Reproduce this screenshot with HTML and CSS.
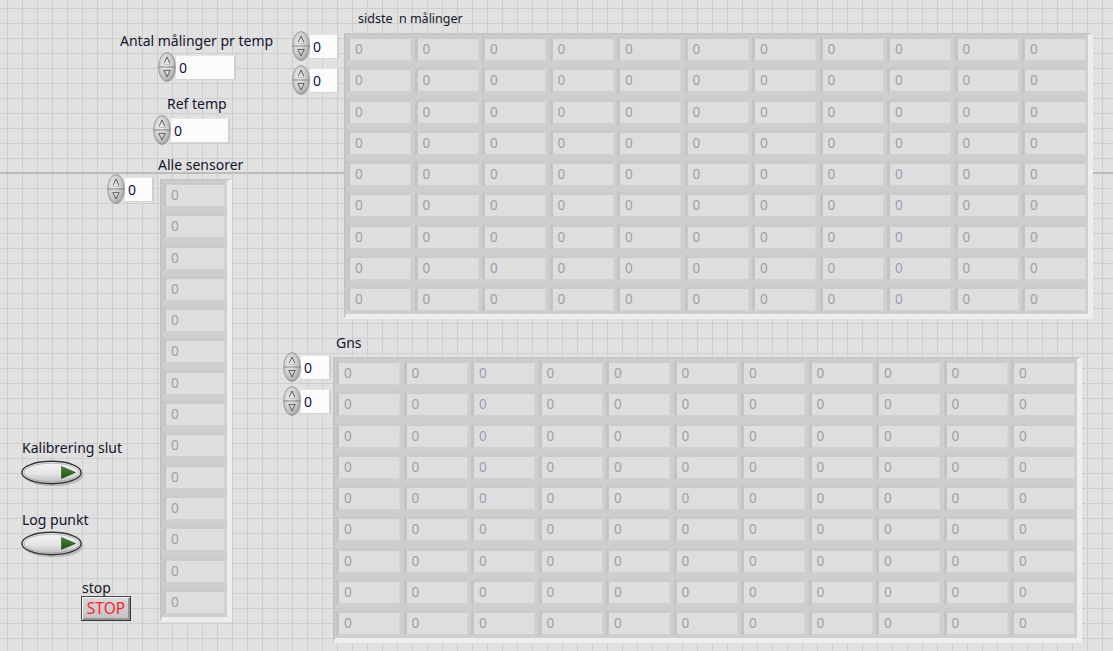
FILE: index.html
```html
<!DOCTYPE html>
<html lang="da">
<head>
<meta charset="utf-8">
<title>Kalibrering</title>
<link rel="stylesheet" href="styles.css">
</head>
<body>
<div class="panel">

  <!-- Antal målinger pr temp -->
  <div class="obj obj-antal">
    <div class="label">Antal målinger pr temp</div>
    <div class="numeric ind-antal">
      <svg class="spin" width="18" height="30" viewBox="0 0 18 30"><defs><radialGradient id="sg" cx="0.4" cy="0.4" r="0.75"><stop offset="0" stop-color="#f2f2f2"/><stop offset="0.55" stop-color="#c9c9c9"/><stop offset="1" stop-color="#8e8e8e"/></radialGradient></defs><ellipse cx="9" cy="15" rx="8.4" ry="14.4" fill="url(#sg)" stroke="#8e8e8e" stroke-width="0.8"/><line x1="1" y1="15" x2="17" y2="15" stroke="#7c7c7c" stroke-width="0.9"/><path d="M6.2 11.2 L9 5 L11.8 11.2" fill="none" stroke="#5e5e5e" stroke-width="1"/><line x1="5.8" y1="12.4" x2="12.2" y2="12.4" stroke="#b0b0b0" stroke-width="0.8"/><path d="M5.8 18.4 L12.2 18.4 L9 25 Z" fill="none" stroke="#5e5e5e" stroke-width="1"/></svg>
      <div class="field w60">0</div>
    </div>
  </div>

  <!-- Ref temp -->
  <div class="obj obj-ref">
    <div class="label">Ref temp</div>
    <div class="numeric ind-ref">
      <svg class="spin" width="18" height="30" viewBox="0 0 18 30"><ellipse cx="9" cy="15" rx="8.4" ry="14.4" fill="url(#sg)" stroke="#8e8e8e" stroke-width="0.8"/><line x1="1" y1="15" x2="17" y2="15" stroke="#7c7c7c" stroke-width="0.9"/><path d="M6.2 11.2 L9 5 L11.8 11.2" fill="none" stroke="#5e5e5e" stroke-width="1"/><line x1="5.8" y1="12.4" x2="12.2" y2="12.4" stroke="#b0b0b0" stroke-width="0.8"/><path d="M5.8 18.4 L12.2 18.4 L9 25 Z" fill="none" stroke="#5e5e5e" stroke-width="1"/></svg>
      <div class="field w59">0</div>
    </div>
  </div>

  <!-- Alle sensorer -->
  <div class="obj obj-alle">
    <div class="label">Alle sensorer</div>
    <div class="array-row">
      <div class="index-col">
        <div class="numeric">
          <svg class="spin" width="18" height="30" viewBox="0 0 18 30"><ellipse cx="9" cy="15" rx="8.4" ry="14.4" fill="url(#sg)" stroke="#8e8e8e" stroke-width="0.8"/><line x1="1" y1="15" x2="17" y2="15" stroke="#7c7c7c" stroke-width="0.9"/><path d="M6.2 11.2 L9 5 L11.8 11.2" fill="none" stroke="#5e5e5e" stroke-width="1"/><line x1="5.8" y1="12.4" x2="12.2" y2="12.4" stroke="#b0b0b0" stroke-width="0.8"/><path d="M5.8 18.4 L12.2 18.4 L9 25 Z" fill="none" stroke="#5e5e5e" stroke-width="1"/></svg>
          <div class="field w29">0</div>
        </div>
      </div>
      <div class="frame frame-alle" id="alle"></div>
    </div>
  </div>

  <!-- sidste n målinger -->
  <div class="obj obj-sidste">
    <div class="label label-small">sidste&nbsp; n målinger</div>
    <div class="array-row">
      <div class="index-col">
        <div class="numeric">
          <svg class="spin" width="18" height="30" viewBox="0 0 18 30"><ellipse cx="9" cy="15" rx="8.4" ry="14.4" fill="url(#sg)" stroke="#8e8e8e" stroke-width="0.8"/><line x1="1" y1="15" x2="17" y2="15" stroke="#7c7c7c" stroke-width="0.9"/><path d="M6.2 11.2 L9 5 L11.8 11.2" fill="none" stroke="#5e5e5e" stroke-width="1"/><line x1="5.8" y1="12.4" x2="12.2" y2="12.4" stroke="#b0b0b0" stroke-width="0.8"/><path d="M5.8 18.4 L12.2 18.4 L9 25 Z" fill="none" stroke="#5e5e5e" stroke-width="1"/></svg>
          <div class="field w29">0</div>
        </div>
        <div class="numeric">
          <svg class="spin" width="18" height="30" viewBox="0 0 18 30"><ellipse cx="9" cy="15" rx="8.4" ry="14.4" fill="url(#sg)" stroke="#8e8e8e" stroke-width="0.8"/><line x1="1" y1="15" x2="17" y2="15" stroke="#7c7c7c" stroke-width="0.9"/><path d="M6.2 11.2 L9 5 L11.8 11.2" fill="none" stroke="#5e5e5e" stroke-width="1"/><line x1="5.8" y1="12.4" x2="12.2" y2="12.4" stroke="#b0b0b0" stroke-width="0.8"/><path d="M5.8 18.4 L12.2 18.4 L9 25 Z" fill="none" stroke="#5e5e5e" stroke-width="1"/></svg>
          <div class="field w29">0</div>
        </div>
      </div>
      <div class="frame frame-2d frame-sidste" id="sidste"></div>
    </div>
  </div>

  <!-- Gns -->
  <div class="obj obj-gns">
    <div class="label">Gns</div>
    <div class="array-row">
      <div class="index-col">
        <div class="numeric">
          <svg class="spin" width="18" height="30" viewBox="0 0 18 30"><ellipse cx="9" cy="15" rx="8.4" ry="14.4" fill="url(#sg)" stroke="#8e8e8e" stroke-width="0.8"/><line x1="1" y1="15" x2="17" y2="15" stroke="#7c7c7c" stroke-width="0.9"/><path d="M6.2 11.2 L9 5 L11.8 11.2" fill="none" stroke="#5e5e5e" stroke-width="1"/><line x1="5.8" y1="12.4" x2="12.2" y2="12.4" stroke="#b0b0b0" stroke-width="0.8"/><path d="M5.8 18.4 L12.2 18.4 L9 25 Z" fill="none" stroke="#5e5e5e" stroke-width="1"/></svg>
          <div class="field w30">0</div>
        </div>
        <div class="numeric">
          <svg class="spin" width="18" height="30" viewBox="0 0 18 30"><ellipse cx="9" cy="15" rx="8.4" ry="14.4" fill="url(#sg)" stroke="#8e8e8e" stroke-width="0.8"/><line x1="1" y1="15" x2="17" y2="15" stroke="#7c7c7c" stroke-width="0.9"/><path d="M6.2 11.2 L9 5 L11.8 11.2" fill="none" stroke="#5e5e5e" stroke-width="1"/><line x1="5.8" y1="12.4" x2="12.2" y2="12.4" stroke="#b0b0b0" stroke-width="0.8"/><path d="M5.8 18.4 L12.2 18.4 L9 25 Z" fill="none" stroke="#5e5e5e" stroke-width="1"/></svg>
          <div class="field w30">0</div>
        </div>
      </div>
      <div class="frame frame-2d frame-gns" id="gns"></div>
    </div>
  </div>

  <!-- Kalibrering slut -->
  <div class="obj obj-kal">
    <div class="label">Kalibrering slut</div>
    <svg class="bool" width="66" height="28" viewBox="0 0 66 28"><defs><linearGradient id="bgrad" x1="0" y1="0" x2="0" y2="1"><stop offset="0" stop-color="#f7f7f7"/><stop offset="0.55" stop-color="#e4e4e4"/><stop offset="1" stop-color="#b8b8b8"/></linearGradient><linearGradient id="tgrad" x1="0" y1="0" x2="0" y2="1"><stop offset="0" stop-color="#3f8a2c"/><stop offset="1" stop-color="#1f4f16"/></linearGradient></defs><ellipse cx="32.5" cy="14.8" rx="30" ry="11.5" fill="#8f8f8f" opacity="0.45"/><ellipse cx="30.5" cy="12.5" rx="29.6" ry="11.2" fill="url(#bgrad)" stroke="#333333" stroke-width="1.4"/><ellipse cx="30.5" cy="12.5" rx="27.5" ry="9.3" fill="none" stroke="#a6a6a6" stroke-width="0.8"/><path d="M40.5 6.5 L54.5 12.5 L40.5 18.5 Z" fill="url(#tgrad)" stroke="#244f1b" stroke-width="0.6" stroke-linejoin="round"/></svg>
  </div>

  <!-- Log punkt -->
  <div class="obj obj-log">
    <div class="label">Log punkt</div>
    <svg class="bool" width="66" height="28" viewBox="0 0 66 28"><ellipse cx="32.5" cy="14.8" rx="30" ry="11.5" fill="#8f8f8f" opacity="0.45"/><ellipse cx="30.5" cy="12.5" rx="29.6" ry="11.2" fill="url(#bgrad)" stroke="#333333" stroke-width="1.4"/><ellipse cx="30.5" cy="12.5" rx="27.5" ry="9.3" fill="none" stroke="#a6a6a6" stroke-width="0.8"/><path d="M40.5 6.5 L54.5 12.5 L40.5 18.5 Z" fill="url(#tgrad)" stroke="#244f1b" stroke-width="0.6" stroke-linejoin="round"/></svg>
  </div>

  <!-- stop -->
  <div class="obj obj-stop">
    <div class="label">stop</div>
    <div class="stop-btn">STOP</div>
  </div>

</div>
<script src="script.js"></script>
</body>
</html>
```

FILE: styles.css
```css
* { box-sizing: border-box; }

html, body {
  margin: 0;
  padding: 0;
  background: #e1e1e1;
}

.panel {
  position: relative;
  width: 1113px;
  height: 651px;
  overflow: hidden;
  font-family: "Noto Sans", "Open Sans", sans-serif;
  font-size: 14px;
  color: #14142a;
  background-color: #e1e1e1;
  background-image:
    linear-gradient(#bdbdbd, #bdbdbd),
    linear-gradient(to right, #cecece 1px, transparent 1px),
    linear-gradient(to bottom, #cecece 1px, transparent 1px);
  background-repeat: no-repeat, repeat, repeat;
  background-size: 100% 2px, 15px 15px, 15px 15px;
  background-position: 0 172px, 7px 8px, 7px 8px;
}

.obj {
  position: absolute;
  display: flex;
  flex-direction: column;
  align-items: flex-start;
}

.label {
  height: 16px;
  line-height: 16px;
  white-space: nowrap;
}
.label-small { font-size: 12.5px; }

/* numeric controls */
.numeric {
  display: flex;
  align-items: center;
  height: 30px;
}
.spin { display: block; flex: none; }

.field {
  height: 25px;
  line-height: 23px;
  background: #fcfcfc;
  border-top: 1px solid #e6e6e6;
  border-right: 2px solid #d0d0d0;
  border-bottom: 1px solid #d6d6d6;
  padding-left: 3px;
  color: #0b1240;
  font-size: 14px;
}
.w60 { width: 60px; }
.w59 { width: 59px; }
.w29 { width: 29px; }
.w30 { width: 30px; }

.obj-antal { left: 120px; top: 33px; }
.obj-antal .numeric { margin-left: 38px; margin-top: 3px; }

.obj-ref { left: 153px; top: 96px; }
.obj-ref .label { margin-left: 14px; }
.obj-ref .numeric { margin-top: 3px; }

/* arrays */
.array-row {
  display: flex;
  align-items: flex-start;
}
.index-col {
  display: flex;
  flex-direction: column;
  gap: 4px;
}

.frame {
  display: grid;
  background: #cecece;
  border-left: 2px solid #c2c2c2;
  border-top: 2px solid #c6c6c6;
  border-right: 5px solid #eeeeee;
  border-bottom: 5px solid #eeeeee;
  padding: 1px 2px 2px 1px;
}

.cell {
  height: 26px;
  background: #dedede;
  border-left: 3px solid #c4c4c4;
  border-top: 3px solid #cbcbcb;
  border-right: 1px solid #d6d6d6;
  border-bottom: 2px solid #cfcfcf;
  padding-left: 5px;
  line-height: 20px;
  font-size: 13.5px;
  color: #9aa0aa;
}

.frame-2d {
  grid-template-columns: repeat(11, 64px);
  grid-template-rows: repeat(9, 26px);
  column-gap: 3.5px;
  row-gap: 5.25px;
}

.frame-alle {
  grid-template-columns: 62px;
  grid-template-rows: repeat(14, 26px);
  row-gap: 5.3px;
}

.obj-alle { left: 107px; top: 157px; }
.obj-alle .label { margin-left: 51px; }
.obj-alle .index-col { margin-top: 1px; }
.obj-alle .frame { margin-left: 6px; margin-top: 6px; }

.obj-sidste { left: 292px; top: 11px; }
.obj-sidste .label { margin-left: 66px; }
.obj-sidste .index-col { margin-top: 4px; }
.obj-sidste .frame { margin-left: 5px; margin-top: 6px; }

.obj-gns { left: 283px; top: 335px; }
.obj-gns .label { margin-left: 53px; }
.obj-gns .index-col { margin-top: 1px; }
.obj-gns .frame { margin-left: 2px; margin-top: 6px; }

/* booleans */
.bool { display: block; }
.obj-kal { left: 21px; top: 440px; gap: 4px; }
.obj-kal .label, .obj-log .label { margin-left: 1px; }
.obj-log { left: 21px; top: 512px; gap: 3px; }

.obj-stop { left: 81px; top: 580px; }
.obj-stop .label { margin-left: 1px; }
.stop-btn {
  width: 50px;
  height: 25px;
  border: 1px solid #4a4a4a;
  border-right-color: #333333;
  border-bottom-color: #333333;
  box-shadow: inset 1px 1px 0 #f2f2f2, inset -2px -2px 0 #959595;
  background: linear-gradient(#dadada, #c2c2c2);
  color: #ff1e2e;
  font-size: 15.5px;
  line-height: 23px;
  text-align: center;
}
```

FILE: script.js
```js
(function () {
  function fill(id, n) {
    var el = document.getElementById(id);
    var html = '';
    for (var i = 0; i < n; i++) html += '<div class="cell">0</div>';
    el.innerHTML = html;
  }
  fill('alle', 14);
  fill('sidste', 99);
  fill('gns', 99);
})();
```
